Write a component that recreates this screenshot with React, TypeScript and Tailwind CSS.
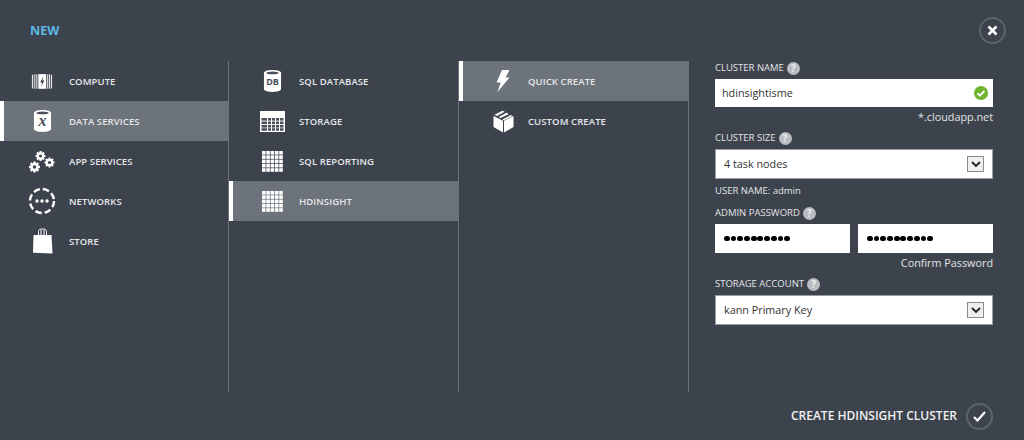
import React from "react";

const Compute = () => (
  <svg width="22" height="17" viewBox="0 0 24 18" fill="none">
    <path d="M1 1.500h1.400v15H1zM3.600 1.200h1.200v15.600H3.600zM5.800 1h1.200v16H5.800zM17.600 1h1.200v16h-1.200zM19.600 1.200h1.200v15.600h-1.200zM21.700 1.500H23v15h-1.300z" fill="#e6e7e9" />
    <rect x="8" y="1" width="8.600" height="16" fill="#fff" />
    <path d="M13.600 3.200 10 10h2.200l-1.200 5 3.600-7h-2.100z" fill="#3c434d" />
  </svg>
);
const Cylinder = ({ label, serif }: { label: string; serif?: boolean }) => (
  <svg width="19" height="24" viewBox="0 0 20 24">
    <path d="M1 3.500C1 1.600 5 .5 10 .5s9 1.100 9 3v17c0 1.900-4 3-9 3s-9-1.100-9-3z" fill="#fff" />
    <ellipse cx="10" cy="3.500" rx="6.500" ry="1.500" fill="#4a505a" />
    <text
      x="10"
      y={serif ? 17.500 : 16.500}
      textAnchor="middle"
      fontSize={serif ? 17 : 9.500}
      fontWeight={700}
      fontStyle={serif ? "italic" : "normal"}
      fontFamily={serif ? "'Liberation Serif', serif" : "'Open Sans', sans-serif"}
      fill="#4a505a"
    >
      {label}
    </text>
  </svg>
);
const Gear = ({ x, y, r }: { x: number; y: number; r: number }) => (
  <g transform={`translate(${x} ${y})`}>
    {[0, 45, 90, 135].map((a) => (
      <rect key={a} x={-r * 0.28} y={-r * 1.300} width={r * 0.56} height={r * 2.600} fill="#fff" transform={`rotate(${a})`} />
    ))}
    <circle r={r} fill="#fff" />
    <circle r={r * 0.42} fill="#3c434d" />
  </g>
);
const Gears = () => (
  <svg width="26" height="23" viewBox="0 0 26 23">
    <Gear x={11.500} y={6} r={3.800} />
    <Gear x={20.500} y={12.500} r={3.800} />
    <Gear x={5.500} y={17} r={4.200} />
  </svg>
);
const Networks = () => (
  <svg width="28" height="28" viewBox="0 0 28 28" fill="none">
    <circle cx="14" cy="14" r="12" stroke="#fff" strokeWidth="2.400" strokeDasharray="6.500 3" />
    <circle cx="9" cy="14" r="1.700" fill="#fff" />
    <circle cx="14" cy="14" r="1.700" fill="#fff" />
    <circle cx="19" cy="14" r="1.700" fill="#fff" />
  </svg>
);
const Bag = () => (
  <svg width="21" height="26" viewBox="0 0 21 26" fill="none">
    <path d="M6.500 7V3.500C6.500 1.500 8 1 10.500 1s4 .5 4 2.500V7M9 7V2M12 7V2" stroke="#fff" strokeWidth="1" />
    <path d="M1.500 7h18l1 18.500-19.500-.8z" fill="#fff" />
  </svg>
);
const Table = () => (
  <svg width="25" height="21" viewBox="0 0 25 21">
    <rect width="25" height="21" fill="#fff" />
    {[7, 10.500, 14, 17.200].map((y) => (
      <rect key={y} x="1.500" y={y} width="22" height="2.600" fill="#4b515a" />
    ))}
    {[7, 11, 15, 19].map((x) => (
      <rect key={x} x={x} y="6" width="1" height="14" fill="#fff" />
    ))}
  </svg>
);
const Grid = () => (
  <svg width="21" height="21" viewBox="0 0 21 21" fill="#fff">
    {[0, 4.300, 8.600, 12.900, 17.200].flatMap((y) =>
      [0, 4.300, 8.600, 12.900, 17.200].map((x) => <rect key={`${x}-${y}`} x={x} y={y} width="3.600" height="3.600" />)
    )}
  </svg>
);
const Bolt = () => (
  <svg width="14" height="22" viewBox="0 0 14 22">
    <path d="M6 0H13.500L9.700 7.500H13.500L1.500 22L4.700 12.500H.5z" fill="#fff" />
  </svg>
);
const Box = () => (
  <svg width="21" height="23" viewBox="0 0 21 23" fill="#fff">
    <path d="M10 10.800 .5 6v11l9.500 5.500zM11 10.800 20.500 6v11L11 22.500zM1.500 4.800 9.500.7l2.300 1.100-8 4.200zM5.500 7l8-4.200 2.300 1.200-8 4.100zM9.700 9.300l8-4.200 1.800.9-9 4.500z" />
  </svg>
);

type Item = { label: string; icon: React.ReactNode; active?: boolean };

const col1: Item[] = [
  { label: "COMPUTE", icon: <Compute /> },
  { label: "DATA SERVICES", icon: <Cylinder label="x" serif />, active: true },
  { label: "APP SERVICES", icon: <Gears /> },
  { label: "NETWORKS", icon: <Networks /> },
  { label: "STORE", icon: <Bag /> },
];
const col2: Item[] = [
  { label: "SQL DATABASE", icon: <Cylinder label="DB" /> },
  { label: "STORAGE", icon: <Table /> },
  { label: "SQL REPORTING", icon: <Grid /> },
  { label: "HDINSIGHT", icon: <Grid />, active: true },
];
const col3: Item[] = [
  { label: "QUICK CREATE", icon: <Bolt />, active: true },
  { label: "CUSTOM CREATE", icon: <Box /> },
];

const Column = ({ items, w, gutter }: { items: Item[]; w: string; gutter: string }) => (
  <div className={`${w} shrink-0 flex flex-col border-r border-[#6b727a]`}>
    {items.map((it) => (
      <div
        key={it.label}
        className={`h-10 flex items-center border-l-4 ${it.active ? "bg-[#6c737b] border-white" : "border-transparent"}`}
      >
        <div className={`${gutter} flex justify-center shrink-0`}>{it.icon}</div>
        <span className="pt-[2px] text-[9.500px] font-semibold text-[#e6e7e8] tracking-[0.1px]">{it.label}</span>
      </div>
    ))}
  </div>
);

const Help = () => (
  <span className="ml-[3px] w-[13px] h-[13px] rounded-full bg-[#b9bcc0] text-[#eef0f0] text-[10px] font-bold flex items-center justify-center leading-none">
    ?
  </span>
);
const Label = ({ children, className = "" }: { children: React.ReactNode; className?: string }) => (
  <div className={`flex items-center h-[14px] text-[9.500px] text-[#e3e4e6] ${className}`}>
    {children}
    <Help />
  </div>
);
const Select = ({ value, h }: { value: string; h: string }) => (
  <div className={`${h} bg-white border border-[#9a9ea3] flex items-center justify-between pl-[8px] pr-[8px] text-[10.800px] text-[#333]`}>
    <span>{value}</span>
    <span className="w-[17px] h-4 bg-[#eeeeee] border border-[#8a8a8a] flex items-center justify-center">
      <svg width="10" height="7" viewBox="0 0 10 7" fill="none">
        <path d="M1 1l4 4 4-4" stroke="#222" strokeWidth="1.800" />
      </svg>
    </span>
  </div>
);
const Dots = () => (
  <div className="h-[29px] flex-1 bg-white flex items-center gap-[0.900px] pl-[9px]">
    {Array.from({ length: 10 }).map((_, i) => (
      <span key={i} className="w-[5.800px] h-[5.800px] rounded-full bg-black" />
    ))}
  </div>
);

export default function App() {
  return (
    <div className="w-[1024px] h-[440px] bg-[#3c434d] flex flex-col overflow-hidden font-['Open_Sans','Liberation_Sans',sans-serif]">
      <div className="h-[61px] shrink-0 flex items-center justify-between pl-[30px] pr-[18px]">
        <span className="pt-[2px] text-[12.500px] font-bold text-[#5cb7e4]">NEW</span>
        <span className="w-[27px] h-[27px] rounded-full border-2 border-[#5c636c] flex items-center justify-center">
          <svg width="11" height="11" viewBox="0 0 11 11">
            <path d="M1.500 1.500l8 8M9.500 1.500l-8 8" stroke="#fff" strokeWidth="2.600" />
          </svg>
        </span>
      </div>
      <div className="h-[331px] shrink-0 flex">
        <Column items={col1} w="w-[229px]" gutter="w-[65px] pl-[11px]" />
        <Column items={col2} w="w-[230px]" gutter="w-[66px] pl-[12px]" />
        <Column items={col3} w="w-[230px]" gutter="w-[65px] pl-[15px]" />
        <div className="w-[278px] ml-[26px] flex flex-col">
          <Label>CLUSTER NAME</Label>
          <div className="mt-[4px] h-[28px] bg-white flex items-center justify-between pl-[7px] pr-[5px] text-[10.800px] text-[#333]">
            <span>hdinsightisme</span>
            <svg width="14" height="14" viewBox="0 0 13 13">
              <circle cx="6.500" cy="6.500" r="6.500" fill="#6cb52d" />
              <path d="M3.200 6.700l2.300 2.300 4.200-4.500" fill="none" stroke="#fff" strokeWidth="1.800" />
            </svg>
          </div>
          <div className="mt-[2px] h-[15px] text-right text-[10.800px] text-[#e3e4e6] leading-[15px]">*.cloudapp.net</div>
          <Label className="mt-[7px]">CLUSTER SIZE</Label>
          <div className="mt-[4px]">
            <Select value="4 task nodes" h="h-[30px]" />
          </div>
          <div className="mt-[5px] h-[14px] text-[9.500px] text-[#e3e4e6] leading-[14px]">USER NAME: admin</div>
          <Label className="mt-[8px]">ADMIN PASSWORD</Label>
          <div className="mt-[4px] flex gap-2">
            <Dots />
            <Dots />
          </div>
          <div className="mt-[2px] h-[15px] text-right text-[10.800px] text-[#e3e4e6] leading-[15px]">Confirm Password</div>
          <Label className="mt-[7px]">STORAGE ACCOUNT</Label>
          <div className="mt-[4px]">
            <Select value="kann Primary Key" h="h-[30px]" />
          </div>
        </div>
      </div>
      <div className="flex-1 flex items-center justify-end pr-[31px] gap-[9px]">
        <span className="text-[12px] font-semibold text-[#f0f0f0]">CREATE HDINSIGHT CLUSTER</span>
        <span className="w-[27px] h-[27px] rounded-full border-2 border-[#5c636c] flex items-center justify-center">
          <svg width="13" height="11" viewBox="0 0 13 11">
            <path d="M1 6l3.500 3.500L12 1" fill="none" stroke="#fff" strokeWidth="2.200" />
          </svg>
        </span>
      </div>
    </div>
  );
}
